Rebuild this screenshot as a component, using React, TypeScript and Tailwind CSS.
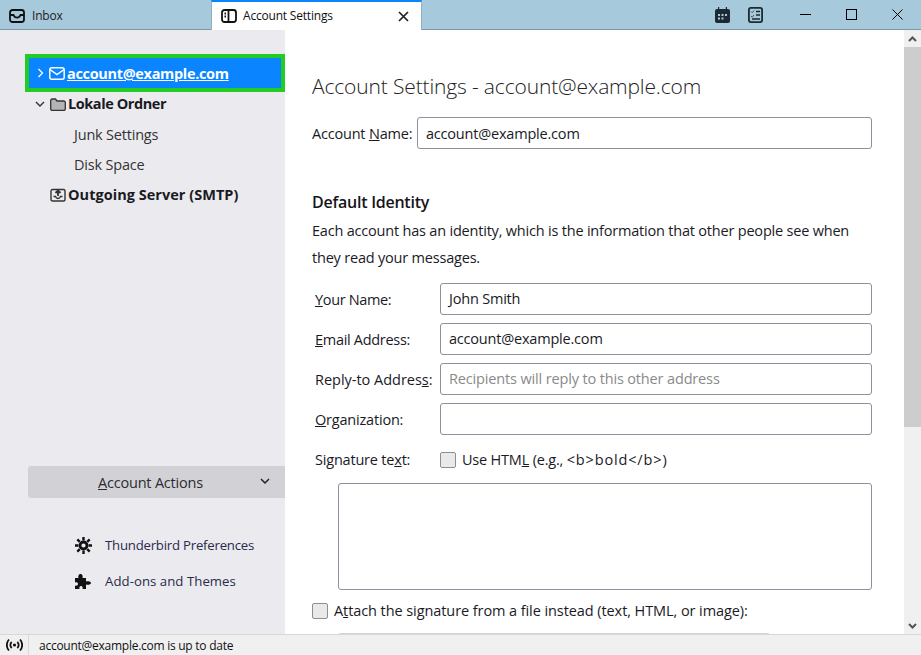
import React from "react";

const Field = ({ label, value, placeholder, track }: { label: [string, string, string]; value?: string; placeholder?: string; track?: string }) => (
  <div className="flex items-center h-[32px] mb-[8px]">
    <div className={`w-[128px] pl-[3px] whitespace-nowrap ${track ?? ""}`}>
      {label[0]}<span className="underline">{label[1]}</span>{label[2]}
    </div>
    <div className={`w-[432px] h-[32px] border border-[#8f8f9d] rounded-[3px] pl-[8px] flex items-center bg-white ${placeholder ? "text-[#8a8a8a] tracking-[-0.15px]" : ""}`}>
      {value ?? placeholder}
    </div>
  </div>
);

const Checkbox = () => <span className="block w-[16px] h-[16px] bg-[#e9e9e9] border border-[#8f8f8f] rounded-[2px] shrink-0" />;

export default function App() {
  return (
    <div className="w-[921px] h-[655px] flex flex-col overflow-hidden bg-white text-[14.5px] text-[#1a1a2e] tracking-[-0.2px]" style={{ fontFamily: '"Open Sans","Noto Sans",sans-serif' }}>
      {/* Tab bar */}
      <div className="h-[30px] shrink-0 flex bg-[#a6c9db] border-b border-[#7f96a3] relative">
        <div className="w-[211px] flex items-center pl-[9px] pt-[2px] gap-[7px] text-[12px] text-[#222]">
          <svg width="16" height="14" viewBox="0 0 16 14" fill="none" stroke="#111" strokeWidth="1.8"><rect x="1" y="1" width="14" height="12" rx="2.5" /><path d="M1 6h3.500c.8 2 2 2.600 3.500 2.600S10.700 8 11.500 6H15" /></svg>
          <span>Inbox</span>
        </div>
        <div className="w-[211px] h-[30px] bg-white border-t-2 border-t-[#0a84ff] border-x border-x-[#8fb0c0] flex items-center pl-[9px] text-[12px] text-[#111]">
          <svg width="16" height="14" viewBox="0 0 16 14" fill="none" stroke="#111" strokeWidth="1.8" className="mr-[6px]"><rect x="1" y="1" width="14" height="12" rx="2.5" /><path d="M7.500 1v12" /><path d="M3.500 4.500h1.500M3.500 7.500h1.500" /></svg>
          <span>Account Settings</span>
          <svg width="11" height="11" viewBox="0 0 11 11" stroke="#222" strokeWidth="1.7" className="ml-[65px]"><path d="M1 1l9 9M10 1l-9 9" /></svg>
        </div>
        <div className="flex-1 flex items-center pl-[293px]">
          <svg width="15" height="16" viewBox="0 0 15 16" fill="#1c2b33"><path d="M3 0h1.200v2h6.600V0H12v2h1a2 2 0 0 1 2 2v10a2 2 0 0 1-2 2H2a2 2 0 0 1-2-2V4a2 2 0 0 1 2-2h1z" /><path fill="#a6c9db" d="M3 7h2v2H3zM6.500 7h2v2h-2zM10 7h2v2h-2zM3 10.500h2v2H3zM6.500 10.500h2v2h-2z" /></svg>
          <svg width="15" height="16" viewBox="0 0 15 16" fill="none" className="ml-[18px]"><rect x="0.900" y="0.900" width="13.200" height="14.200" rx="2" stroke="#1c2b33" strokeWidth="1.800" /><path d="M3 4.500l1.200 1.200L6 3.500M3 9l1.200 1.200L6 8" stroke="#555" strokeWidth="1" /><path d="M8 4.500h4M8 8h4M4 12h8" stroke="#1c2b33" strokeWidth="1.400" /></svg>
          <svg width="11" height="1" viewBox="0 0 11 1" className="ml-[37px]"><rect width="11" height="1" fill="#000" /></svg>
          <svg width="11" height="11" viewBox="0 0 11 11" fill="none" stroke="#000" className="ml-[35px]"><rect x="0.500" y="0.500" width="10" height="10" /></svg>
          <svg width="11" height="11" viewBox="0 0 11 11" stroke="#000" className="ml-[35px]"><path d="M.5.500l10 10M10.500.500l-10 10" /></svg>
        </div>
      </div>

      <div className="flex-1 flex min-h-0">
        {/* Sidebar */}
        <aside className="w-[285px] shrink-0 bg-[#ebebef] flex flex-col pl-[25px] pt-[24px] font-bold">
          <div className="h-[38px] bg-[#0a84ff] border-[4px] border-[#22cc22] text-white flex items-center pl-[6px]">
            <svg width="7" height="10" viewBox="0 0 7 10" fill="none" stroke="#fff" strokeWidth="1.300" className="ml-[2px] mr-[5px]"><path d="M1.500 1l4 4-4 4" /></svg>
            <svg width="16" height="13" viewBox="0 0 16 13" fill="none" stroke="#fff" strokeWidth="1.500"><rect x=".8" y=".8" width="14.400" height="11.400" rx="2" /><path d="M1 2.500l7 5 7-5" /></svg>
            <span className="underline ml-[2px] pt-[1px] tracking-[-0.33px]">account@example.com</span>
          </div>
          <div className="h-[30px] flex items-center pl-[10px] mt-[-3px] text-[#1a1a1f]">
            <svg width="10" height="7" viewBox="0 0 10 7" fill="none" stroke="#333" strokeWidth="1.400" className="mr-[5px]"><path d="M1 1l4 4 4-4" /></svg>
            <svg width="16" height="13" viewBox="0 0 16 13" fill="#b4b4b4" stroke="#333" strokeWidth="1.300"><path d="M.7 2.500A1.500 1.500 0 0 1 2.200 1h3.300l1.500 2h6.800a1.500 1.500 0 0 1 1.500 1.500v6.500a1.500 1.500 0 0 1-1.500 1.500H2.200A1.500 1.500 0 0 1 .7 11z" /></svg>
            <span className="ml-[2px] tracking-[-0.43px]">Lokale Ordner</span>
          </div>
          <div className="h-[30px] flex items-center pl-[49px] pt-[1px] font-normal text-[#333]">Junk Settings</div>
          <div className="h-[30px] flex items-center pl-[49px] pt-[1px] font-normal text-[#333]">Disk Space</div>
          <div className="h-[30px] flex items-center pl-[25px] pt-[1px] text-[#1a1a1f]">
            <svg width="16" height="14" viewBox="0 0 16 14" fill="none" stroke="#333" strokeWidth="1.400"><rect x="1" y="1.500" width="14" height="11.500" rx="1.500" /><path d="M3.500 8.500h2c.5 1.500 1.300 2 2.500 2s2-.5 2.500-2h2" /><path d="M8 8V2.500M5.500 5L8 2.500 10.500 5" strokeWidth="1.800" /></svg>
            <span className="ml-[2px] tracking-[0.03px]">Outgoing Server (SMTP)</span>
          </div>
          <div className="flex-1" />
          <div className="h-[32px] ml-[3px] bg-[#d2d2d6] rounded-l-[3px] flex items-center font-normal text-[#2b2b33] relative mb-[29px]">
            <span className="w-full text-center pr-[12px] pt-[2px]"><span className="underline">A</span>ccount Actions</span>
            <svg width="10" height="7" viewBox="0 0 10 7" fill="none" stroke="#222" strokeWidth="1.500" className="absolute right-[15px] top-[12px]"><path d="M1 1l4 4 4-4" /></svg>
          </div>
          <div className="h-[36px] flex items-center pl-[50px] font-normal text-[13.2px] text-[#2a2a4a]">
            <svg width="17" height="17" viewBox="0 0 17 17" fill="none" stroke="#111"><circle cx="8.500" cy="8.500" r="3.500" strokeWidth="2.800" /><path d="M8.500 0v3.500M8.500 13.500v3.500M0 8.500h3.500M13.500 8.500h3.500M2.300 2.300l2.500 2.500M12.200 12.200l2.500 2.500M14.700 2.300l-2.500 2.500M4.800 12.200l-2.500 2.500" strokeWidth="2.400" /></svg>
            <span className="ml-[13px] pt-[2px] tracking-[-0.22px]">Thunderbird Preferences</span>
          </div>
          <div className="h-[36px] flex items-center pl-[50px] font-normal text-[13.2px] text-[#2a2a4a] mb-[35px]">
            <svg width="16" height="16" viewBox="0 0 16 16" fill="#111"><path d="M0 5h3.500C3 3.500 3.500 1 5.500 1S8 3.500 7.500 5H11v3.500c1.500-.5 5-.3 5 1.500s-3.500 2-5 1.500V16H7.500c.5-1.500 0-3-1.500-3s-2 1.500-1.500 3H0v-3.500C1.500 13 3 12.500 3 11S1.500 9 0 9.500z" /></svg>
            <span className="ml-[14px] pt-[2px] tracking-[0.05px]">Add-ons and Themes</span>
          </div>
        </aside>

        {/* Main */}
        <main className="flex-1 min-w-0 overflow-hidden pl-[27px] pr-[32px] pt-[41px] text-[#1a1a1f]">
          <h1 className="text-[21px] font-light leading-[30px] text-[#222] tracking-[-0.15px] whitespace-nowrap">Account Settings - account@example.com</h1>
          <div className="flex items-center h-[32px] mt-[16px] whitespace-nowrap">
            <span className="w-[105px] pt-[1px]">Account <span className="underline">N</span>ame:</span>
            <div className="w-[455px] h-[32px] border border-[#8f8f9d] rounded-[3px] pl-[8px] pt-[1px] flex items-center">account@example.com</div>
          </div>
          <h2 className="text-[16px] font-semibold leading-[22px] mt-[42px] text-[#15141a] tracking-[-0.25px]">Default Identity</h2>
          <p className="leading-[27px] mt-[4px] mb-[12px] w-[560px]">Each account has an identity, which is the information that other people see when they read your messages.</p>
          <Field label={["", "Y", "our Name:"]} value="John Smith" track="tracking-[-0.35px] pt-[1px]" />
          <Field label={["", "E", "mail Address:"]} value="account@example.com" track="tracking-[-0.3px] pt-[1px]" />
          <Field label={["Reply-to Addres", "s", ":"]} placeholder="Recipients will reply to this other address" track="tracking-[-0.02px] pt-[1px]" />
          <Field label={["", "O", "rganization:"]} value="" track="pt-[1px]" />
          <div className="flex items-center h-[32px] pt-[1px]">
            <span className="w-[128px] pl-[3px]">Signature te<span className="underline">x</span>t:</span>
            <Checkbox />
            <span className="ml-[6px]">Use HTM<span className="underline">L</span> (e.g., <span className="tracking-[0.85px]">&lt;b&gt;bold&lt;/b&gt;)</span></span>
          </div>
          <div className="ml-[26px] w-[534px] h-[107px] mt-[8px] border border-[#8f8f9d] rounded-[3px]" />
          <div className="flex items-center mt-[13px] h-[16px]">
            <Checkbox />
            <span className="ml-[6px] whitespace-nowrap tracking-[-0.08px]">A<span className="underline">t</span>tach the signature from a file instead (text, HTML, or image):</span>
          </div>
          <div className="ml-[26px] w-[432px] h-[30px] mt-[14px] bg-[#d5d5d8] rounded-t-[3px]" />
        </main>

        {/* Scrollbar */}
        <div className="w-[17px] shrink-0 bg-[#f0f0f0] flex flex-col items-center">
          <div className="h-[17px] flex items-center">
            <svg width="9" height="6" viewBox="0 0 9 6" fill="none" stroke="#555" strokeWidth="2"><path d="M1 5l3.500-3.500L8 5" /></svg>
          </div>
          <div className="w-full h-[380px] bg-[#cdcdcd]" />
          <div className="flex-1" />
          <div className="h-[17px] flex items-center">
            <svg width="9" height="6" viewBox="0 0 9 6" fill="none" stroke="#555" strokeWidth="2"><path d="M1 1l3.500 3.500L8 1" /></svg>
          </div>
        </div>
      </div>

      {/* Status bar */}
      <div className="h-[21px] shrink-0 bg-[#f0f0f0] border-t border-[#d8d8d8] flex items-center text-[12px] text-[#111]">
        <div className="w-[29px] h-full border-r border-[#d8d8d8] flex items-center justify-center">
          <svg width="17" height="14" viewBox="0 0 17 14" fill="none" stroke="#111" strokeWidth="1.800"><circle cx="8.500" cy="7" r="1.600" fill="#111" stroke="none" /><path d="M5.700 4a4 4 0 0 0 0 6M11.300 4a4 4 0 0 1 0 6M3 1.500a8 8 0 0 0 0 11M14 1.500a8 8 0 0 1 0 11" /></svg>
        </div>
        <span className="ml-[10px] pt-[1px] tracking-[-0.26px]">account@example.com is up to date</span>
      </div>
    </div>
  );
}
